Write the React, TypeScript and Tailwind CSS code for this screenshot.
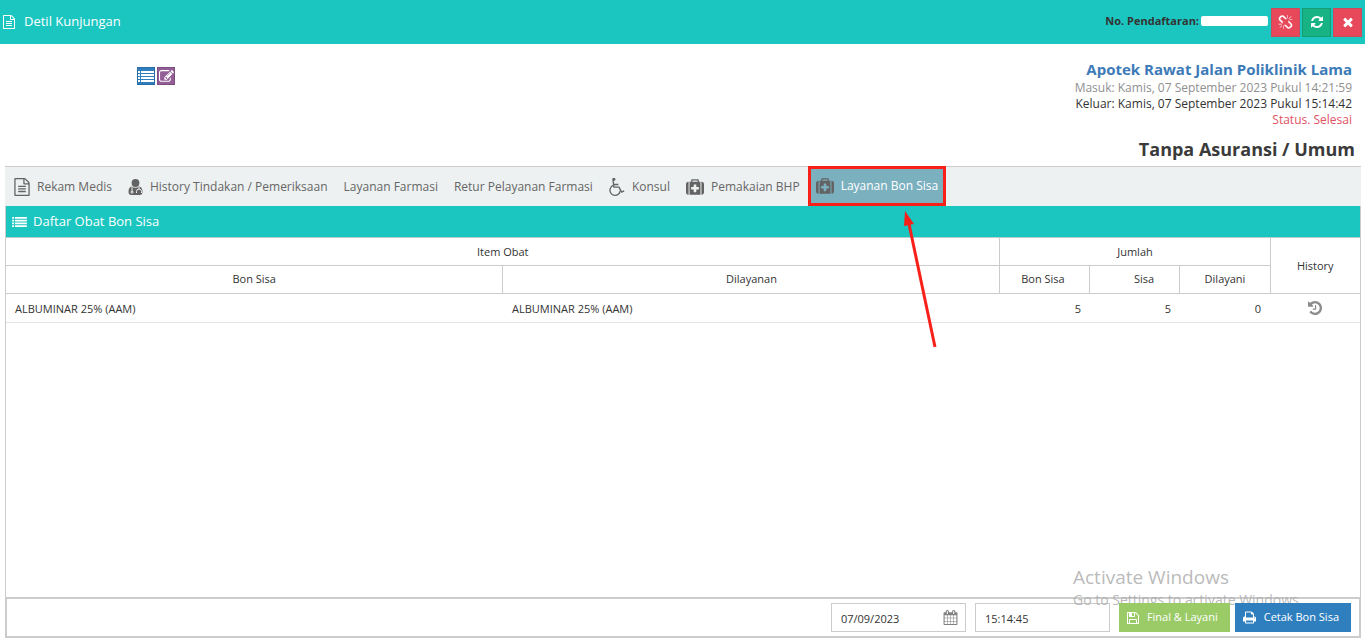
import { type ReactNode } from "react";

type IconProps = { className?: string };

const glyph = (d: string, viewBox = "0 0 1792 1792") =>
  function Glyph({ className }: IconProps) {
    return (
      <svg
        viewBox={viewBox}
        fill="currentColor"
        aria-hidden="true"
        className={className}
      >
        <path d={d} />
      </svg>
    );
  };

const FileTextIcon = glyph(
  "M1596 380q28 28 48 76t20 88v1152q0 40-28 68t-68 28h-1344q-40 0-68-28t-28-68v-1600q0-40 28-68t68-28h896q40 0 88 20t76 48zm-444-244v376h376q-10-29-22-41l-313-313q-12-12-41-22zm384 1528v-1024h-416q-40 0-68-28t-28-68v-416h-768v1536h1280zm-1024-864q0-14 9-23t23-9h704q14 0 23 9t9 23v64q0 14-9 23t-23 9h-704q-14 0-23-9t-9-23v-64zm736 224q14 0 23 9t9 23v64q0 14-9 23t-23 9h-704q-14 0-23-9t-9-23v-64q0-14 9-23t23-9h704zm0 256q14 0 23 9t9 23v64q0 14-9 23t-23 9h-704q-14 0-23-9t-9-23v-64q0-14 9-23t23-9h704z",
  "128 0 1536 1792",
);
const TimesIcon = glyph(
  "M1490 1322q0 40-28 68l-136 136q-28 28-68 28t-68-28l-294-294-294 294q-28 28-68 28t-68-28l-136-136q-28-28-28-68t28-68l294-294-294-294q-28-28-28-68t28-68l136-136q28-28 68-28t68 28l294 294 294-294q28-28 68-28t68 28l136 136q28 28 28 68t-28 68l-294 294 294 294q28 28 28 68z",
);
const RefreshIcon = glyph(
  "M1639 1056q0 5-1 7-64 268-268 434.5t-478 166.5q-146 0-282.5-55t-243.5-157l-129 129q-19 19-45 19t-45-19-19-45v-448q0-26 19-45t45-19h448q26 0 45 19t19 45-19 45l-137 137q71 66 161 102t187 36q134 0 250-65t186-179q11-17 53-117 8-23 30-23h192q13 0 22.5 9.5t9.5 22.5zm25-800v448q0 26-19 45t-45 19h-448q-26 0-45-19t-19-45 19-45l138-138q-148-137-349-137-134 0-250 65t-186 179q-11 17-53 117-8 23-30 23h-199q-13 0-22.5-9.5t-9.5-22.5v-7q65-268 270-434.5t480-166.5q146 0 284 55.5t245 156.5l130-129q19-19 45-19t45 19 19 45z",
);
const HistoryIcon = glyph(
  "M1664 896q0 156-61 298t-164 245-245 164-298 61q-172 0-327-72.5t-264-204.5q-7-10-6.5-22.5t8.5-20.5l137-138q10-9 25-9 16 2 23 12 73 95 179 147t225 52q104 0 198.5-40.5t163.5-109.5 109.5-163.5 40.5-198.5-40.5-198.5-109.5-163.5-163.5-109.5-198.5-40.5q-98 0-188 35.5t-160 101.5l137 138q31 30 14 69-17 40-59 40h-448q-26 0-45-19t-19-45v-448q0-42 40-59 39-17 69 14l130 129q107-101 244.5-156.5t284.5-55.5q156 0 298 61t245 164 164 245 61 298zm-640-288v448q0 14-9 23t-23 9h-320q-14 0-23-9t-9-23v-64q0-14 9-23t23-9h224v-352q0-14 9-23t23-9h64q14 0 23 9t9 23z",
  "128 128 1536 1536",
);
const ListIcon = glyph(
  "M0 1h2v2H0zM3 1h13v2H3zM0 4h2v2H0zM3 4h13v2H3zM0 7h2v2H0zM3 7h13v2H3zM0 10h2v2H0zM3 10h13v2H3z",
  "0 0 16 13",
);
const CalendarIcon = glyph(
  "M192 1664h288v-288h-288v288zm352 0h320v-288h-320v288zm-352-352h288v-320h-288v320zm352 0h320v-320h-320v320zm-352-384h288v-288h-288v288zm736 736h320v-288h-320v288zm-384-736h320v-288h-320v288zm768 736h288v-288h-288v288zm-384-352h320v-320h-320v320zm-352-864v-288q0-13-9.5-22.5t-22.5-9.5h-64q-13 0-22.5 9.5t-9.5 22.5v288q0 13 9.5 22.5t22.5 9.5h64q13 0 22.5-9.5t9.5-22.5zm736 864h288v-320h-288v320zm-384-384h320v-288h-320v288zm384 0h288v-288h-288v288zm32-480v-288q0-13-9.5-22.5t-22.5-9.5h-64q-13 0-22.5 9.5t-9.5 22.5v288q0 13 9.5 22.5t22.5 9.5h64q13 0 22.5-9.5t9.5-22.5zm384-64v1280q0 52-38 90t-90 38h-1408q-52 0-90-38t-38-90v-1280q0-52 38-90t90-38h128v-96q0-66 47-113t113-47h64q66 0 113 47t47 113v96h384v-96q0-66 47-113t113-47h64q66 0 113 47t47 113v96h128q52 0 90 38t38 90z",
);
const PencilSquareIcon = glyph(
  "M888 1184l116-116-152-152-116 116v56h96v96h56zm440-720q-16-16-33 1l-350 350q-17 17-1 33t33-1l350-350q17-17 1-33zm80 594v190q0 119-84.5 203.5t-203.5 84.5h-832q-119 0-203.5-84.5t-84.5-203.5v-832q0-119 84.5-203.5t203.5-84.5h832q63 0 117 25 15 7 18 23 3 17-9 29l-49 49q-14 14-32 8-23-6-45-6h-832q-66 0-113 47t-47 113v832q0 66 47 113t113 47h832q66 0 113-47t47-113v-126q0-13 9-22l64-64q15-15 35-7t20 29zm-96-738l288 288-672 672h-288v-288zm444 132l-92 92-288-288 92-92q28-28 68-28t68 28l152 152q28 28 28 68t-28 68z",
);
const SaveIcon = glyph(
  "M512 1536h768v-384h-768v384zm896 0h128v-896q0-14-10-38.5t-20-34.5l-281-281q-10-10-34-20t-39-10v416q0 40-28 68t-68 28h-576q-40 0-68-28t-28-68v-416h-128v1280h128v-416q0-40 28-68t68-28h832q40 0 68 28t28 68v416zm-384-928v-320q0-13-9.5-22.5t-22.5-9.5h-192q-13 0-22.5 9.5t-9.5 22.5v320q0 13 9.5 22.5t22.5 9.5h192q13 0 22.5-9.5t9.5-22.5zm640 32v928q0 40-28 68t-68 28h-1344q-40 0-68-28t-28-68v-1344q0-40 28-68t68-28h928q40 0 88 20t76 48l280 280q28 28 48 76t20 88z",
  "128 128 1536 1536",
);
const PrintIcon = glyph(
  "M448 1536h896v-256h-896v256zm0-640h896v-384h-160q-40 0-68-28t-28-68v-160h-640v640zm1152 64q0-26-19-45t-45-19-45 19-19 45 19 45 45 19 45-19 19-45zm128 0v416q0 13-9.5 22.5t-22.5 9.5h-224v160q0 40-28 68t-68 28h-960q-40 0-68-28t-28-68v-160h-224q-13 0-22.5-9.5t-9.5-22.5v-416q0-79 56.5-135.5t135.5-56.5h64v-544q0-40 28-68t68-28h672q40 0 88 20t76 48l152 152q28 28 48 76t20 88v256h64q79 0 135.5 56.5t56.5 135.5z",
  "64 64 1664 1664",
);
const MedkitIcon = glyph(
  "M1280 1120v-192q0-14-9-23t-23-9h-224v-224q0-14-9-23t-23-9h-192q-14 0-23 9t-9 23v224h-224q-14 0-23 9t-9 23v192q0 14 9 23t23 9h224v224q0 14 9 23t23 9h192q14 0 23-9t9-23v-224h224q14 0 23-9t9-23zm-640-736h512v-128h-512v128zm-384 0v1280h-32q-92 0-158-66t-66-158v-832q0-92 66-158t158-66h32zm1184 0v1280h-1088v-1280h160v-160q0-40 28-68t68-28h576q40 0 68 28t28 68v160h160zm352 224v832q0 92-66 158t-158 66h-32v-1280h32q92 0 158 66t66 158z",
);
const WheelchairIcon = glyph(
  "M1023 1187l102 204q-58 179-210 290t-339 111q-156 0-288.5-77.5t-210-210-77.5-288.5q0-181 104.5-330t274.5-211l17 131q-122 54-195 165.5t-73 244.5q0 185 131.5 316.5t316.5 131.5q126 0 232.5-65t165-175.5 49.5-236.5zm429 44l58 114-256 128q-13 7-29 7-40 0-57-35l-239-477h-472q-24 0-42.5-16.5t-21.5-40.5l-96-779q-2-16 6-42 14-51 57-82.5t97-31.5q66 0 113 47t47 113q0 69-52 117.5t-120 41.5l37 289h423v128h-407l16 128h455q40 0 57 35l228 455z",
  "0 0 1536 1792",
);
const UnlinkIcon = glyph(
  "M503 1271l-256 256q-10 9-23 9-12 0-23-9-9-10-9-23t9-23l256-256q10-9 23-9t23 9q9 10 9 23t-9 23zm169 41v320q0 14-9 23t-23 9-23-9-9-23v-320q0-14 9-23t23-9 23 9 9 23zm-224-224q0 14-9 23t-23 9h-320q-14 0-23-9t-9-23 9-23 23-9h320q14 0 23 9t9 23zm1264 128q0 120-85 203l-147 146q-83 83-203 83-121 0-204-85l-334-335q-21-21-42-56l239-18 273 274q28 28 68 27.5t68-27.5l147-146q28-28 28-67 0-40-28-68l-274-275 18-239q35 21 56 42l336 336q84 86 84 204zm-617-724l-239 18-273-274q-28-28-68-28-39 0-68 27l-147 146q-28 28-28 67 0 40 28 68l274 274-18 240q-35-21-56-42l-336-336q-84-86-84-204 0-120 85-203l147-146q83-83 203-83 121 0 204 85l334 335q21 21 42 56zm633 84q0 14-9 23t-23 9h-320q-14 0-23-9t-9-23 9-23 23-9h320q14 0 23 9t9 23zm-544-544v320q0 14-9 23t-23 9-23-9-9-23v-320q0-14 9-23t23-9 23 9 9 23zm407 151l-256 256q-11 9-23 9t-23-9q-9-10-9-23t9-23l256-256q10-9 23-9t23 9q9 10 9 23t-9 23z",
);

const DoctorIcon = ({ className }: IconProps) => (
  <svg viewBox="0 0 14 16" aria-hidden="true" className={className}>
    <circle cx="7" cy="4" r="3.9" fill="currentColor" />
    <path
      d="M3.4 7.6C1 8 0 10 0 13c0 2 1 3 2.7 3h8.600C13 16 14 15 14 13c0-3-1-5-3.4-5.4C8.5 9.2 5.5 9.2 3.4 7.6z"
      fill="currentColor"
    />
    <path
      d="M3.5 8v4.5M10.5 8v2M8 14v-1.5a2.5 2.5 0 0 1 5 0V14"
      fill="none"
      stroke="#edf1f1"
    />
    <circle cx="3.5" cy="13.2" r="1" fill="none" stroke="#edf1f1" />
  </svg>
);

type Tab = { label: string; icon?: ReactNode; active?: boolean };

const tabs: Tab[] = [
  { label: "Rekam Medis", icon: <FileTextIcon className="h-[18px] w-4" /> },
  {
    label: "History Tindakan / Pemeriksaan",
    icon: <DoctorIcon className="h-4 w-[15px]" />,
  },
  { label: "Layanan Farmasi" },
  { label: "Retur Pelayanan Farmasi" },
  { label: "Konsul", icon: <WheelchairIcon className="h-[18px] w-4" /> },
  { label: "Pemakaian BHP", icon: <MedkitIcon className="size-[18px]" /> },
  {
    label: "Layanan Bon Sisa",
    icon: <MedkitIcon className="size-[18px]" />,
    active: true,
  },
];

const rows = [
  {
    bonSisa: "ALBUMINAR 25% (AAM)",
    dilayanan: "ALBUMINAR 25% (AAM)",
    jumlah: 5,
    sisa: 5,
    dilayani: 0,
  },
];

const Header = () => (
  <header className="flex h-[44px] items-center justify-between bg-[#1bc6c1] px-[3px]">
    <h1 className="flex items-center gap-[9px] text-[13px] text-white">
      <FileTextIcon className="h-[14px] w-3" />
      Detil Kunjungan
    </h1>
    <div className="flex items-center gap-[2px]">
      <span className="pb-[2px] text-[11px] font-bold text-[#333]">
        No. Pendaftaran:
      </span>
      <span className="mr-px mb-[2px] h-[10px] w-[67px] rounded-xs bg-white" />
      <button
        aria-label="Putuskan"
        className="flex size-[29px] items-center justify-center border border-[#c94b5c] bg-[#e7495b] text-white"
      >
        <UnlinkIcon className="size-[15px]" />
      </button>
      <button
        aria-label="Muat ulang"
        className="flex size-[29px] items-center justify-center border border-[#159c70] bg-[#18b384] text-white"
      >
        <RefreshIcon className="size-[14px]" />
      </button>
      <button
        aria-label="Tutup"
        className="flex size-[29px] items-center justify-center border border-[#c94b5c] bg-[#e7495b] text-white"
      >
        <TimesIcon className="size-[14px]" />
      </button>
    </div>
  </header>
);

const VisitInfo = () => (
  <section className="flex justify-between pt-[15px] pr-[10px] pb-[3px]">
    <div className="ml-[137px] flex items-start gap-[2px] pt-2">
      <button
        aria-label="Daftar"
        className="flex size-[18px] items-center justify-center border border-[#2a6ca5] bg-[#2f7fbf] text-white"
      >
        <ListIcon className="h-[13px] w-4" />
      </button>
      <button
        aria-label="Ubah"
        className="flex size-[18px] items-center justify-center border border-[#7d4f80] bg-[#935d95] text-white"
      >
        <PencilSquareIcon className="size-[15px]" />
      </button>
    </div>
    <div className="text-right text-[12px] leading-4">
      <div className="pr-[3px]">
        <h2 className="text-[15px] leading-[21px] font-bold text-[#3c7ab8]">
          Apotek Rawat Jalan Poliklinik Lama
        </h2>
        <p className="text-[#909090]">
          Masuk: Kamis, 07 September 2023 Pukul 14:21:59
        </p>
        <p className="text-[#333]">
          Keluar: Kamis, 07 September 2023 Pukul 15:14:42
        </p>
        <p className="text-[#e0525f]">Status. Selesai</p>
      </div>
      <h3 className="mt-[7px] text-[18px] leading-7 font-bold text-[#3a3a3a]">
        Tanpa Asuransi / Umum
      </h3>
    </div>
  </section>
);

const TabBar = () => (
  <nav className="flex h-[40px] items-stretch border-t border-[#ccc] bg-[#edf1f1] pl-px text-[12px] text-[#666]">
    {tabs.map((tab) => (
      <button
        key={tab.label}
        className={
          tab.active
            ? "-mt-px flex items-center gap-[7px] border-3 border-[#f9201a] bg-[#7bb0bf] px-[5px] text-white"
            : "flex items-center gap-[7px] px-2"
        }
      >
        {tab.icon && <span className="text-[#636363]">{tab.icon}</span>}
        {tab.label}
      </button>
    ))}
  </nav>
);

const StockTable = () => (
  <table className="w-full table-fixed border-collapse text-[11px] text-[#333]">
    <colgroup>
      <col />
      <col />
      <col className="w-[90px]" />
      <col className="w-[90px]" />
      <col className="w-[90px]" />
      <col className="w-[90px]" />
    </colgroup>
    <thead className="[&_th]:border-[#ccc] [&_th]:font-normal">
      <tr className="h-[27px] border-b border-[#ccc]">
        <th colSpan={2} className="border-r pt-[2px]">
          Item Obat
        </th>
        <th colSpan={3} className="border-r pt-[2px]">
          Jumlah
        </th>
        <th rowSpan={2} className="pt-[2px]">
          History
        </th>
      </tr>
      <tr className="h-[28px] border-b border-[#ccc]">
        <th className="border-r">Bon Sisa</th>
        <th className="border-r">Dilayanan</th>
        <th className="border-r pr-1">Bon Sisa</th>
        <th className="border-r pl-[18px]">Sisa</th>
        <th className="border-r">Dilayani</th>
      </tr>
    </thead>
    <tbody>
      {rows.map((row, i) => (
        <tr key={i} className="h-[29px] border-b border-[#e4e4e4]">
          <td className="px-[9px] pt-[3px]">{row.bonSisa}</td>
          <td className="px-[9px] pt-[3px]">{row.dilayanan}</td>
          <td className="px-[9px] pt-[3px] text-right">{row.jumlah}</td>
          <td className="px-[9px] pt-[3px] text-right">{row.sisa}</td>
          <td className="px-[9px] pt-[3px] text-right">{row.dilayani}</td>
          <td>
            <button
              aria-label="Lihat history"
              className="mx-auto block text-[#8c8c8c]"
            >
              <HistoryIcon className="size-[14px]" />
            </button>
          </td>
        </tr>
      ))}
    </tbody>
  </table>
);

const Footer = () => (
  <footer className="flex h-[41px] items-center justify-end gap-[5px] border-2 border-[#ccc] pr-2 text-[11px]">
    <label className="mr-1 flex h-[29px] w-[135px] items-center border border-[#ccc] pr-[7px] pl-[9px] text-[#333]">
      <input
        aria-label="Tanggal"
        defaultValue="07/09/2023"
        className="w-full min-w-0 flex-1 pt-[3px] outline-none"
      />
      <CalendarIcon className="mb-px size-[15px] shrink-0 text-[#808080]" />
    </label>
    <input
      aria-label="Jam"
      defaultValue="15:14:45"
      className="mr-1 h-[29px] w-[135px] border border-[#ccc] px-[9px] pt-px text-[#333] outline-none"
    />
    <button className="relative z-10 flex h-[29px] items-center gap-2 bg-[#9acb67] pr-3 pl-2 text-white">
      <SaveIcon className="size-3" />
      Final &amp; Layani
    </button>
    <button className="relative z-10 flex h-[29px] items-center gap-2 bg-[#2f7fbf] pr-3 pl-2 text-white">
      <PrintIcon className="size-[13px]" />
      Cetak Bon Sisa
    </button>
  </footer>
);

export default function App() {
  return (
    <div className="relative flex min-h-screen flex-col bg-white font-['Open_Sans','Noto_Sans',sans-serif]">
      <Header />
      <VisitInfo />
      <main className="mr-1 mb-[3px] ml-[5px] flex flex-1 flex-col">
        <TabBar />
        <section className="flex flex-1 flex-col border-x border-[#ccc]">
          <h2 className="flex h-8 items-center gap-[6px] border-b border-[#b9cccc] bg-[#1bc6c1] pl-[6px] text-[13px] text-white">
            <ListIcon className="h-3 w-[15px]" />
            Daftar Obat Bon Sisa
          </h2>
          <StockTable />
        </section>
        <Footer />
      </main>

      {/* pointer to the active tab */}
      <svg
        viewBox="0 0 36 140"
        aria-hidden="true"
        className="pointer-events-none absolute top-[210px] left-[902px] h-[140px] w-9"
      >
        <path d="M33 137L7 14" stroke="#f9201a" strokeWidth="3" />
        <path d="M3 1L2 16L7 15L12 14z" fill="#f9201a" />
      </svg>

      {/* desktop watermark */}
      <div className="pointer-events-none absolute right-[58px] bottom-[31px] w-[234px] whitespace-nowrap text-[#a8a8a8]/80">
        <p className="text-[19px] leading-[26px]">Activate Windows</p>
        <p className="text-[14px] leading-5">
          Go to Settings to activate Windows.
        </p>
      </div>
    </div>
  );
}
